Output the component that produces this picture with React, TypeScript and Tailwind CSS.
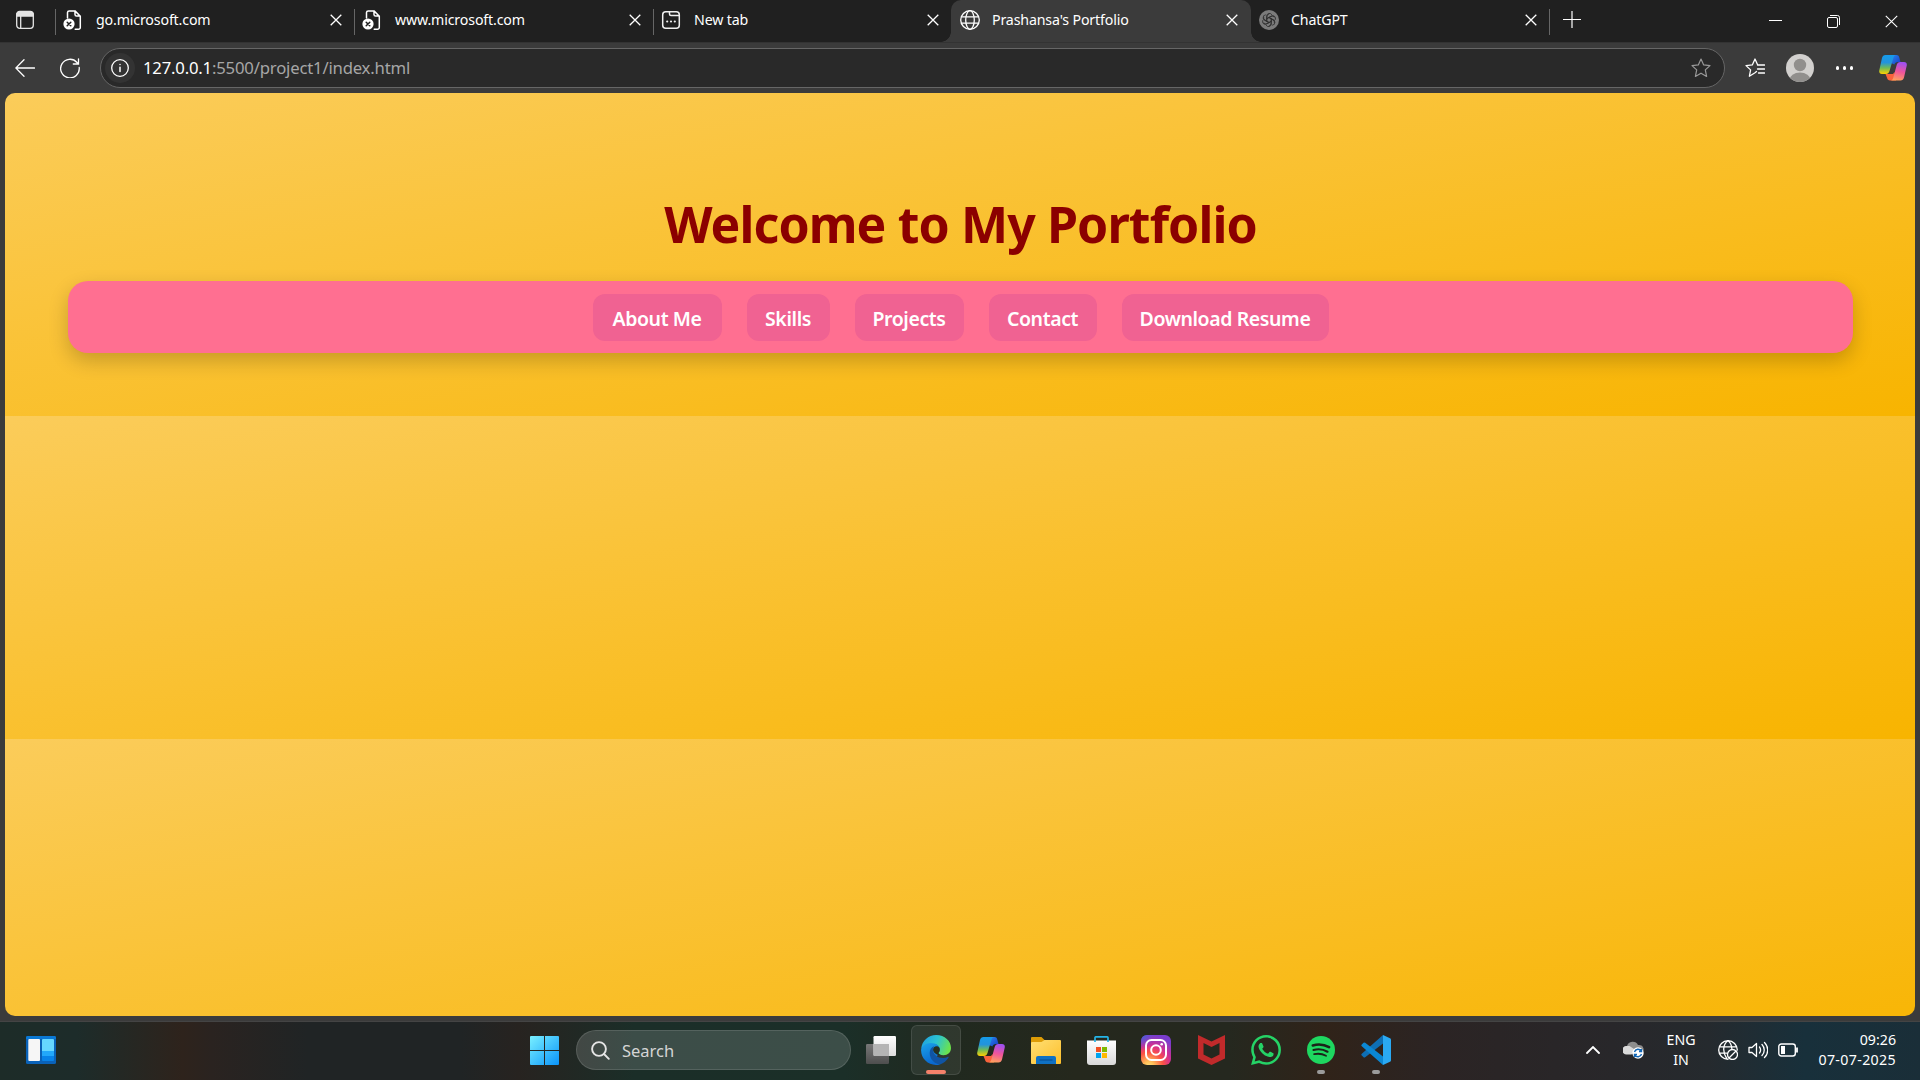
import React, { type ReactNode } from "react";

type IconProps = { className?: string };

function Stroke({ size = 20, w = 1.2, children, className = "" }: { size?: number; w?: number; children: ReactNode; className?: string }) {
  return (
    <svg width={size} height={size} viewBox={`0 0 ${size} ${size}`} fill="none" stroke="currentColor" strokeWidth={w} strokeLinecap="round" strokeLinejoin="round" className={`shrink-0 ${className}`}>
      {children}
    </svg>
  );
}

function TabActionsIcon() {
  return (
    <Stroke w={1.3} className="text-[#e4e4e4]">
      <rect x="1.7" y="1.7" width="16.6" height="16.6" rx="3" />
      <path d="M1.7 6V4.5a3 3 0 0 1 3-3h10.600a3 3 0 0 1 3 3V6Z" fill="currentColor" />
      <path d="M5.700 6v12" />
    </Stroke>
  );
}

function ErrorPageIcon() {
  return (
    <Stroke w={1.5} className="text-white">
      <path d="M4.500 8V2.500A1.700 1.700 0 0 1 6.200 .9H12l5.300 5.300v11.200a1.800 1.800 0 0 1-1.800 1.800h-3.300M12 1v3.500a1.600 1.600 0 0 0 1.600 1.600h3.700" />
      <circle cx="6" cy="14" r="5.600" fill="white" stroke="none" />
      <path d="m4.200 12.200 3.600 3.600m0-3.600-3.600 3.600" stroke="#202020" />
    </Stroke>
  );
}

function NewTabIcon() {
  return (
    <Stroke w={1.5} className="text-[#f0f0f0]">
      <rect x="1.700" y="1.700" width="16.600" height="16.600" rx="3" />
      <path d="M8.500 1.700v2.300a1.500 1.500 0 0 0 1.500 1.500h8" />
      <path d="M6.200 11.500h.01M10 11.500h.01M13.800 11.500h.01" strokeWidth="2.200" />
    </Stroke>
  );
}

function GlobeIcon() {
  return (
    <Stroke w={1.3} className="text-white">
      <circle cx="10" cy="10" r="9.300" />
      <ellipse cx="10" cy="10" rx="4.300" ry="9.300" />
      <path d="M1.500 6.800h17M1.500 13.200h17" />
    </Stroke>
  );
}

function ChatIcon() {
  return (
    <Stroke w={0.9} className="text-[#303030]">
      <circle cx="10" cy="10" r="10" fill="#7b7b7b" stroke="none" />
      {[0, 60, 120, 180, 240, 300].map((a) => (
        <path key={a} transform={`rotate(${a} 10 10)`} d="M7.800 11.200V6a2.700 2.700 0 0 1 4.900-1.500M7.800 8.700l4-2.300a2.700 2.700 0 0 1 3.200.4" />
      ))}
    </Stroke>
  );
}

function Cross({ s = 12, w = 1.3 }: { s?: number; w?: number }) {
  return (
    <svg width={s} height={s} viewBox="0 0 12 12" fill="none" stroke="white" strokeWidth={w}>
      <path d="m.7.7 10.600 10.600M11.300.7.7 11.300" />
    </svg>
  );
}

function CopilotIcon({ className = "" }: IconProps) {
  return (
    <svg viewBox="0 0 28 26" className={className}>
      <defs>
        <linearGradient id="cpA" x1="0" y1="0" x2="0" y2="1">
          <stop offset="0" stopColor="#159bea" />
          <stop offset=".4" stopColor="#2393dc" />
          <stop offset=".68" stopColor="#6fbb56" />
          <stop offset="1" stopColor="#ffd000" />
        </linearGradient>
        <linearGradient id="cpB" x1=".5" y1="0" x2=".3" y2="1">
          <stop offset="0" stopColor="#a050f0" />
          <stop offset=".5" stopColor="#f0559a" />
          <stop offset="1" stopColor="#ffa35c" />
        </linearGradient>
        <linearGradient id="cpC" x1="0" y1="0" x2="1" y2="1">
          <stop offset="0" stopColor="#2a86ee" />
          <stop offset="1" stopColor="#173cc4" />
        </linearGradient>
      </defs>
      <path d="M14 0h3.500c1.500 0 2.300.8 2.700 2.200L21.500 7h-2.600c-2 0-3 1-3.500 2.500L12 8Z" fill="url(#cpC)" />
      <path d="M6.500 19h7.500l1.500-2 1.500 8.500h-6c-1.700 0-2.500-1-3-2.700Z" fill="#f9633c" />
      <path d="M6.500 0H17c-1.400 0-2 1-2.500 2.500l-4 13.500c-.6 2-1.700 3-3.500 3H3C.7 19-.2 17.300.3 15.200L3 3C3.500 1 4.700 0 6.500 0Z" fill="url(#cpA)" />
      <path d="M21.300 7H25c2.300 0 3.200 1.700 2.700 3.700L25 22.500c-.5 2-1.700 3-3.500 3H11.500c1.500 0 2.300-1 2.700-2.500l3.500-13C18.200 8 19.500 7 21.300 7Z" fill="url(#cpB)" />
    </svg>
  );
}

function EdgeIcon() {
  return (
    <svg width="30" height="30" viewBox="0 0 30 30">
      <defs>
        <linearGradient id="edA" x1="0" y1=".2" x2="1" y2=".5">
          <stop offset="0" stopColor="#1f9fe0" />
          <stop offset=".5" stopColor="#2bc3d2" />
          <stop offset="1" stopColor="#6be34c" />
        </linearGradient>
        <linearGradient id="edB" x1="0" y1="0" x2=".4" y2="1">
          <stop offset="0" stopColor="#1ba4ea" />
          <stop offset="1" stopColor="#0a68cf" />
        </linearGradient>
      </defs>
      <path d="M.2 14C.8 5.800 7.300 0 15.200 0 23.800 0 30 6 30 13c0 4.300-3.200 7.200-7.500 7.200-3 0-5-1-5-2.200 0-.8 1.300-1.300 1.300-3.300 0-3-2.700-5.700-6.800-5.700C5.500 9 1.500 12 .2 14Z" fill="url(#edA)" />
      <path d="M.1 14.500C1 10.700 4.800 7.900 9.800 7.900c5.300 0 9 2.800 9 6.500 0 2.300-1.300 2.600-1.300 3.800l-4 8L19 29.400c-1.300.4-2.700.6-4 .6C6.500 30-.4 23 .1 14.500Z" fill="url(#edB)" />
      <path d="M13 11.200c-2.700 1-4.300 3.600-4.300 6.900C8.700 24 13.500 29.300 19 29.400c3.800-1.300 6.700-3.700 8.500-6.600.4-.7-.1-1.200-.9-.8-1.200.6-2.700 1-4.500 1-5.500 0-10-3.500-10-8 0-1.500.4-2.800.9-3.800Z" fill="#1054a3" />
      <path d="M13 12.200c1-.9 2.500-1.200 3.900-.7 1.200.5 1.900 1.600 1.900 2.900 0 2.300-1.300 2.600-1.300 3.800 0 .8.900 1.500 2.400 1.900-3.900.2-7.800-2.400-7.800-5.400 0-1 .3-1.800.9-2.500Z" fill="#26301f" />
    </svg>
  );
}

function WindowsIcon() {
  return (
    <svg width="29" height="29" viewBox="0 0 29 29">
      <defs>
        <linearGradient id="wnA" x1="0" y1="0" x2="29" y2="29" gradientUnits="userSpaceOnUse">
          <stop offset="0" stopColor="#79f0ff" />
          <stop offset="1" stopColor="#0a94fa" />
        </linearGradient>
      </defs>
      <path d="M1 0h13v14H0V1a1 1 0 0 1 1-1ZM15 0h13a1 1 0 0 1 1 1v13H15ZM0 15h14v14H1a1 1 0 0 1-1-1ZM15 15h14v13a1 1 0 0 1-1 1H15Z" fill="url(#wnA)" />
    </svg>
  );
}

function WidgetsIcon() {
  return (
    <svg width="30" height="28" viewBox="0 0 30 28">
      <rect width="30" height="28" rx="1.500" fill="#0a62b8" />
      <path d="M1.500 0h27A1.500 1.500 0 0 1 30 1.500V3H0V1.500A1.500 1.500 0 0 1 1.500 0Z" fill="#0a78d4" />
      <rect x="2.300" y="3" width="11.700" height="22" rx="1" fill="#f6f6f6" />
      <path d="M16 4a1 1 0 0 1 1-1h10a1 1 0 0 1 1 1v11H16Z" fill="#66d7ff" />
      <path d="M16 15h12v5H16Z" fill="#22a8fa" />
      <path d="M16 20h12v4a1 1 0 0 1-1 1H17a1 1 0 0 1-1-1Z" fill="#0883e8" />
    </svg>
  );
}

function TaskViewIcon() {
  return (
    <svg width="30" height="28" viewBox="0 0 30 28">
      <defs>
        <linearGradient id="tvA" x1="0" y1="0" x2="0" y2="1">
          <stop offset="0" stopColor="#777" />
          <stop offset="1" stopColor="#4e4e4e" />
        </linearGradient>
        <linearGradient id="tvB" x1="0" y1="0" x2="0" y2="1">
          <stop offset="0" stopColor="#fff" />
          <stop offset="1" stopColor="#ddd" />
        </linearGradient>
      </defs>
      <rect y="8" width="23" height="20" rx="1.200" fill="url(#tvA)" />
      <rect x="7.500" width="22.500" height="20" rx="1.200" fill="url(#tvB)" />
      <path d="M7.500 8H23v12H8.700a1.200 1.200 0 0 1-1.200-1.200Z" fill="#b4b4b4" />
    </svg>
  );
}

function FolderIcon() {
  return (
    <svg width="30" height="27" viewBox="0 0 30 27">
      <defs>
        <linearGradient id="fdA" x1="0" y1="0" x2="1" y2="1">
          <stop offset="0" stopColor="#ffdf74" />
          <stop offset="1" stopColor="#fdbf2b" />
        </linearGradient>
      </defs>
      <path d="M0 1a1 1 0 0 1 1-1h9.500l3 3H28v8H0Z" fill="#dd9c06" />
      <path d="M0 6a1 1 0 0 1 1-1h9.500l3-2H29a1 1 0 0 1 1 1v22a1 1 0 0 1-1 1H1a1 1 0 0 1-1-1Z" fill="url(#fdA)" />
      <path d="M5 27v-6a2 2 0 0 1 2-2h16a2 2 0 0 1 2 2v6Z" fill="#0f71c4" />
      <path d="M8.500 23h13" stroke="#064b8e" />
    </svg>
  );
}

function StoreIcon() {
  return (
    <svg width="29" height="29" viewBox="0 0 29 29">
      <defs>
        <linearGradient id="stA" x1="0" y1="0" x2="0" y2="1">
          <stop offset="0" stopColor="#fff" />
          <stop offset="1" stopColor="#d9d9d9" />
        </linearGradient>
      </defs>
      <path d="M0 4.500h29V26a3 3 0 0 1-3 3H3a3 3 0 0 1-3-3Z" fill="url(#stA)" />
      <path d="M8 6V1.800A1 1 0 0 1 9 .8h11a1 1 0 0 1 1 1V6" fill="none" stroke="#25b5e8" strokeWidth="1.700" />
      <path d="M9 11h5v5H9Z" fill="#f25022" />
      <path d="M15 11h5v5h-5Z" fill="#7fba00" />
      <path d="M9 17h5v5H9Z" fill="#00a4ef" />
      <path d="M15 17h5v5h-5Z" fill="#ffb900" />
    </svg>
  );
}

function InstagramIcon() {
  return (
    <svg width="30" height="30" viewBox="0 0 30 30">
      <defs>
        <radialGradient id="igA" cx=".27" cy="1.050" r="1.050">
          <stop offset="0" stopColor="#ffdc7d" />
          <stop offset=".15" stopColor="#ffc35a" />
          <stop offset=".45" stopColor="#fa5245" />
          <stop offset=".68" stopColor="#d6308e" />
          <stop offset="1" stopColor="#7a3ccd" />
        </radialGradient>
        <radialGradient id="igB" cx="0" cy="0" r=".5">
          <stop offset="0" stopColor="#3d68d8" />
          <stop offset="1" stopColor="#6a45d8" stopOpacity="0" />
        </radialGradient>
      </defs>
      <rect width="30" height="30" rx="6" fill="url(#igA)" />
      <rect width="30" height="30" rx="6" fill="url(#igB)" />
      <g fill="none" stroke="#fff" strokeWidth="2">
        <rect x="5" y="5" width="20" height="20" rx="5.500" />
        <circle cx="15" cy="15" r="4.800" />
      </g>
      <circle cx="20.700" cy="9.300" r="1.300" fill="#fff" />
    </svg>
  );
}

function McAfeeIcon() {
  return (
    <svg width="27" height="30" viewBox="0 0 27 30">
      <path d="M0 0 13.500 6.500 27 0v23.500L13.500 30 0 23.500Zm5.500 8v11.500l8 4 8-4V8l-8 4Z" fill="#c12a2b" />
    </svg>
  );
}

function WhatsAppIcon() {
  return (
    <svg width="30" height="30" viewBox="0 0 24 24" fill="#25d366">
      <path d="M17.472 14.382c-.297-.149-1.758-.867-2.030-.967-.273-.099-.471-.148-.670.150-.197.297-.767.966-.940 1.164-.173.199-.347.223-.644.075-.297-.150-1.255-.463-2.390-1.475-.883-.788-1.480-1.761-1.653-2.059-.173-.297-.018-.458.130-.606.134-.133.298-.347.446-.520.149-.174.198-.298.298-.497.099-.198.050-.371-.025-.520-.075-.149-.669-1.612-.916-2.207-.242-.579-.487-.500-.669-.510-.173-.008-.371-.010-.570-.010-.198 0-.520.074-.792.372-.272.297-1.040 1.016-1.040 2.479 0 1.462 1.065 2.875 1.213 3.074.149.198 2.096 3.200 5.077 4.487.709.306 1.262.489 1.694.625.712.227 1.360.195 1.871.118.571-.085 1.758-.719 2.006-1.413.248-.694.248-1.289.173-1.413-.074-.124-.272-.198-.570-.347m-5.421 7.403h-.004a9.870 9.870 0 01-5.031-1.378l-.361-.214-3.741.982.998-3.648-.235-.374a9.860 9.860 0 01-1.510-5.260c.001-5.450 4.436-9.884 9.888-9.884 2.640 0 5.122 1.030 6.988 2.898a9.825 9.825 0 012.893 6.994c-.003 5.450-4.437 9.884-9.885 9.884m8.413-18.297A11.815 11.815 0 0012.050 0C5.495 0 .160 5.335.157 11.892c0 2.096.547 4.142 1.588 5.945L.057 24l6.305-1.654a11.882 11.882 0 005.683 1.448h.005c6.554 0 11.890-5.335 11.893-11.893a11.821 11.821 0 00-3.480-8.413z" />
    </svg>
  );
}

function SpotifyIcon() {
  return (
    <svg width="28" height="28" viewBox="0 0 28 28" fill="none" stroke="#1b2319" strokeLinecap="round">
      <circle cx="14" cy="14" r="14" fill="#1ed760" stroke="none" />
      <path d="M5.800 9.400c5.500-1.500 11.500-.9 16.300 1.800" strokeWidth="2.600" />
      <path d="M6.500 14c4.700-1.300 9.700-.8 14 1.700" strokeWidth="2.200" />
      <path d="M7.200 18.200c4-.9 8-.5 11.800 1.600" strokeWidth="1.800" />
    </svg>
  );
}

function VSCodeIcon() {
  return (
    <svg width="30" height="30" viewBox="0 0 30 30">
      <path d="M22 0 .8 18.800a1.200 1.200 0 0 0 0 1.800l1.700 1.600a1.300 1.300 0 0 0 1.700 0L22 8.500Z" fill="#0e6fb5" />
      <path d="M22 30 .8 11.200a1.200 1.200 0 0 1 0-1.800l1.700-1.600a1.300 1.300 0 0 1 1.700 0L22 21.500Z" fill="#0b87d3" />
      <path d="M22 0l7 3.300a1.700 1.700 0 0 1 1 1.600v20.200a1.700 1.700 0 0 1-1 1.600L22 30Z" fill="#2aa9f3" />
    </svg>
  );
}

function Tab({ title, icon, active, line, width }: { title: string; icon: ReactNode; active?: boolean; line?: boolean; width: string }) {
  return (
    <div className={`relative flex h-full shrink-0 items-center ${width} ${active ? "bg-[#3b3b3b] rounded-t-[10px] pl-px" : ""}`}>
      {line && <span className="absolute left-0 top-[9px] h-[26px] w-px bg-[#666]" />}
      <div className="-mt-[3px] ml-[8px] flex size-5">{icon}</div>
      <span className={`-mt-[3px] flex-1 whitespace-nowrap text-[14.200px] tracking-[-0.150px] text-white ${line ? "ml-[13px]" : "ml-[12px]"}`}>{title}</span>
      <span className={`-mt-[2px] ${active ? "mr-[13px]" : "mr-[12px]"}`}><Cross /></span>
    </div>
  );
}

function Browser() {
  return (
    <>
      <div className="flex h-[42px] shrink-0 items-stretch bg-[#202020] text-white">
        <div className="flex w-[55px] items-start pl-[15px] pt-[10px]"><TabActionsIcon /></div>
        <Tab title="go.microsoft.com" icon={<ErrorPageIcon />} line width="w-[299px]" />
        <Tab title="www.microsoft.com" icon={<ErrorPageIcon />} line width="w-[299px]" />
        <Tab title="New tab" icon={<NewTabIcon />} line width="w-[298px]" />
        <div className="relative w-[300px]">
          <Tab title="Prashansa's Portfolio" icon={<GlobeIcon />} active width="w-[300px]" />
          <span className="absolute -left-[10px] bottom-0 size-[10px] bg-[radial-gradient(circle_at_0_0,#202020_9.500px,#3b3b3b_10px)]" />
          <span className="absolute -right-[10px] bottom-0 size-[10px] bg-[radial-gradient(circle_at_100%_0,#202020_9.500px,#3b3b3b_10px)]" />
        </div>
        <Tab title="ChatGPT" icon={<ChatIcon />} width="w-[298px]" />
        <span className="mt-[9px] h-[26px] w-px bg-[#666]" />
        <svg className="ml-[13px] mt-[10px]" width="18" height="18" stroke="white" strokeWidth="1.200"><path d="M0 9.500h18M9 1v17" /></svg>
        <div className="ml-auto flex items-center">
          <svg className="mr-[45px] -mt-px" width="13" height="13" stroke="white"><path d="M0 6.500h13" /></svg>
          <svg className="mr-[45px]" width="13" height="13" fill="none" stroke="white"><rect x=".5" y="2.500" width="10" height="10" rx="1.500" /><path d="M3 .5h7.500a2 2 0 0 1 2 2V10" /></svg>
          <span className="mr-[22px]"><Cross s={13} w={1} /></span>
        </div>
      </div>
      <div className="flex h-[51px] shrink-0 items-center border-t border-[#333] bg-[#3b3b3b] text-white">
        <svg className="ml-[15px]" width="20" height="18" fill="none" stroke="white" strokeWidth="1.300" strokeLinecap="round"><path d="M19.500 9H1M9 .7.8 9 9 17.300" /></svg>
        <svg className="ml-[25px]" width="20" height="20" fill="none" stroke="white" strokeWidth="1.300" strokeLinecap="round"><path d="M19.200 9.500A9.300 9.300 0 1 1 17 4.500l1 1.300M18.500 .8V6h-5.200" /></svg>
        <div className="ml-[20px] flex h-10 w-[1625px] items-center rounded-full border border-[#666] bg-[#292929] pl-1">
          <span className="flex size-[30px] items-center justify-center rounded-full bg-[#333]">
            <Stroke size={18} w={1.300}><circle cx="9" cy="9" r="8.300" /><path d="M9 8.200v4.300M9 5.500h.01" strokeWidth="1.500" /></Stroke>
          </span>
          <span className="ml-[8px] flex-1 whitespace-nowrap text-[16.700px] tracking-[-0.190px] text-[#a6a6a6]"><span className="text-white">127.0.0.1</span>:5500/project1/index.html</span>
          <Stroke w={1.200} className="mr-[13px] text-[#999]"><path d="m10 1 2.700 5.900 6.300.7-4.700 4.300 1.300 6.500L10 15.200l-5.600 3.200 1.300-6.500L1 7.600l6.300-.7Z" /></Stroke>
        </div>
        <Stroke w={1.300} className="ml-[20px]"><path d="m11.500 13.500L10 14.800l-5.600 3.400 1.200-6.300L1 7.600l6.300-.7L10 1l2.700 5.900M12.500 7h7M12.500 11h7M13.500 15h6" /></Stroke>
        <svg className="ml-[21px]" width="28" height="28" viewBox="0 0 28 28">
          <clipPath id="av"><circle cx="14" cy="14" r="14" /></clipPath>
          <circle cx="14" cy="14" r="14" fill="#d2d0ce" />
          <g clipPath="url(#av)" fill="#918f8d"><circle cx="14" cy="11" r="6.200" /><ellipse cx="14" cy="26" rx="10.500" ry="7.500" /></g>
        </svg>
        <span className="ml-[22px] flex gap-[3.500px]"><i className="size-[3.400px] rounded-full bg-white" /><i className="size-[3.400px] rounded-full bg-white" /><i className="size-[3.400px] rounded-full bg-white" /></span>
        <CopilotIcon className="ml-auto mr-[13px] h-[26px] w-7" />
      </div>
    </>
  );
}

const LINKS = [
  { label: "About Me", width: "w-[129px]" },
  { label: "Skills", width: "w-[83px]" },
  { label: "Projects", width: "w-[109px]" },
  { label: "Contact", width: "w-[108px]" },
  { label: "Download Resume", width: "w-[207px]" },
];

function Page() {
  return (
    <div className="mx-[5px] h-[923px] shrink-0 overflow-hidden rounded-[10px] bg-[linear-gradient(170deg,#fbcc5a,#f8b400)] bg-[length:100%_323px] pl-[63px] pr-[62px]">
      <h1 className="pt-[91px] text-center text-[50px] font-bold leading-[80px] tracking-[-0.900px] text-[#8b0000]">Welcome to My Portfolio</h1>
      <nav className="mt-[17px] flex h-[72px] items-center justify-center gap-[25px] rounded-[20px] bg-[#ff6f91] shadow-[0_8px_20px_rgba(0,0,0,0.2)]">
        {LINKS.map((l) => (
          <a key={l.label} className={`flex h-[47px] items-center justify-center whitespace-nowrap rounded-[12px] bg-[#f06292] pt-[4px] text-[19.500px] font-semibold tracking-[-0.400px] text-white ${l.width}`}>{l.label}</a>
        ))}
      </nav>
    </div>
  );
}

function TaskItem({ children, active, dot }: { children: ReactNode; active?: boolean; dot?: boolean }) {
  return (
    <div className={`relative mx-[2.500px] flex h-[50px] w-[50px] shrink-0 items-center justify-center rounded-[6px] ${active ? "border border-white/10 bg-white/7" : ""}`}>
      {children}
      {active && <span className="absolute bottom-0 h-1 w-5 rounded-full bg-[#f4816a]" />}
      {dot && <span className="absolute bottom-[1px] h-1 w-2 rounded-full bg-[#9b9b9b]" />}
    </div>
  );
}

function Taskbar() {
  return (
    <div className="flex h-[59px] shrink-0 items-center border-t border-[#444] bg-[linear-gradient(90deg,#1d2c28_0%,#1d2c2a_4%,#2e231c_9.500%,#2a2320_11%,#202425_16%,#202425_24%,#272320_27%,#1b2e28_33%,#1b2f28_44%,#20291f_49%,#25281d_56%,#25281f_64%,#302319_69%,#2b2424_75%,#28272a_84%,#252a2e_89%,#18303b_94%,#1a2e38_100%)] pb-[2px] text-white">
      <div className="ml-[26px] flex w-[504px]"><WidgetsIcon /></div>
      <WindowsIcon />
      <div className="ml-[17px] mr-[2.500px] flex h-10 w-[275px] shrink-0 items-center rounded-full border border-white/12 bg-white/15 pl-[14px]">
        <svg width="19" height="19" fill="none" stroke="#e5e5e5" strokeWidth="1.900" strokeLinecap="round"><circle cx="8" cy="8" r="6.900" /><path d="m13 13 4.800 4.800" /></svg>
        <span className="ml-[12px] pt-[2px] text-[16.500px] text-[#d5d5d5]">Search</span>
      </div>
      <TaskItem><TaskViewIcon /></TaskItem>
      <TaskItem active><EdgeIcon /></TaskItem>
      <TaskItem><CopilotIcon className="h-[26px] w-7" /></TaskItem>
      <TaskItem><FolderIcon /></TaskItem>
      <TaskItem><StoreIcon /></TaskItem>
      <TaskItem><InstagramIcon /></TaskItem>
      <TaskItem><McAfeeIcon /></TaskItem>
      <TaskItem><WhatsAppIcon /></TaskItem>
      <TaskItem dot><SpotifyIcon /></TaskItem>
      <TaskItem dot><VSCodeIcon /></TaskItem>
      <div className="ml-auto flex items-center">
        <svg width="14" height="8" fill="none" stroke="white" strokeWidth="1.800" strokeLinecap="round"><path d="m1 7 6-6 6 6" /></svg>
        <svg className="ml-[23px]" width="21" height="18" viewBox="0 0 21 18">
          <path d="M4 13a4 4 0 0 1 0-8 6 6 0 0 1 11-1 4.500 4.500 0 0 1 2 9Z" fill="#8e8e8e" />
          <path d="M3.500 13.500a3.500 3.500 0 0 1 0-8.500h3l6 4-4 4.500Z" fill="#dadada" />
          <circle cx="15" cy="12" r="5.700" fill="#fff" />
          <path d="M11.500 11a3.700 3.700 0 0 1 6.800-.8M18.500 13a3.700 3.700 0 0 1-6.800.8M18.500 8v2.500H16M11.500 16v-2.500H14" stroke="#1266b5" strokeWidth="1.400" fill="none" />
        </svg>
        <div className="ml-[19px] w-[36px] text-center text-[14.200px] leading-5">ENG<br />IN</div>
        <Stroke w={1.300} className="ml-[19px]"><path d="M10 19.300A9.300 9.300 0 1 1 19.300 10M9 19C4 12 5 4 10 .7M13.800 8.500C13.500 5 12 2 10 .7M1.500 6.800h17M1.500 13.200h7" /><circle cx="14.500" cy="14.500" r="5" /><path d="m11 18 7-7" /></Stroke>
        <Stroke w={1.300} className="ml-[10px]"><path d="M1 7.500h3l4.500-4v13l-4.500-4H1ZM11.500 7c1.300 1.800 1.300 4.200 0 6M14 4.500c3 3.200 3 7.800 0 11M16.500 2.500c4.300 4.300 4.300 10.700 0 15" /></Stroke>
        <svg className="ml-[10px]" width="20" height="14" fill="none" stroke="white" strokeWidth="1.400"><rect x=".8" y="1" width="16.500" height="12" rx="2.500" /><path d="M3 3h4v8H3Z" fill="white" stroke="none" /><path d="M19 4.500v5" strokeWidth="1.800" /></svg>
        <div className="ml-[20px] mr-[24px] w-[78px] whitespace-nowrap text-right text-[14.200px] leading-5"><div>09:26</div><div className="-ml-2 tracking-[0.350px]">07-07-2025</div></div>
      </div>
    </div>
  );
}

export default function App() {
  return (
    <div className="flex h-[1080px] w-[1920px] flex-col overflow-hidden bg-[#3b3b3b] font-['Noto_Sans',sans-serif]">
      <Browser />
      <Page />
      <div className="h-[5px] shrink-0 bg-[#3b3b3b]" />
      <Taskbar />
    </div>
  );
}
